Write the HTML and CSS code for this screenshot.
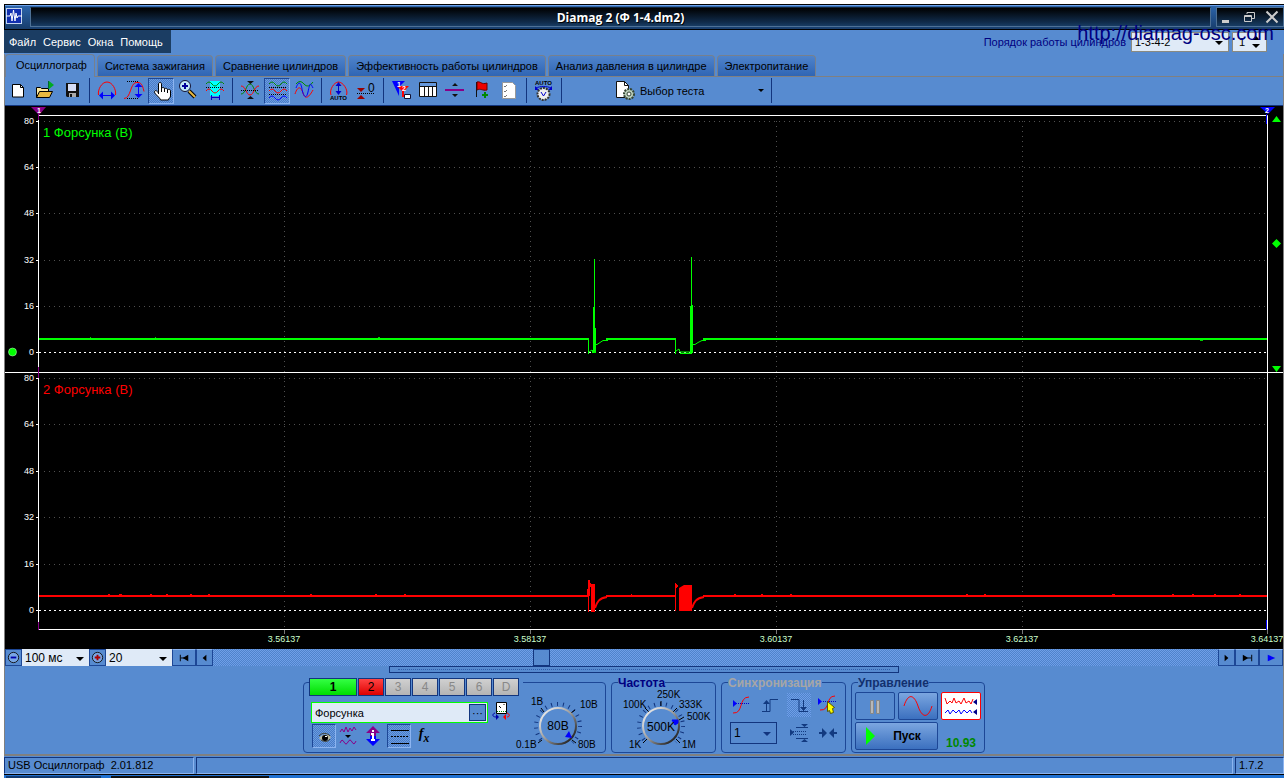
FILE: index.html
```html
<!DOCTYPE html>
<html lang="ru">
<head>
<meta charset="utf-8">
<title>Diamag 2</title>
<link rel="stylesheet" href="styles.css">
</head>
<body>
<div class="app">
  <header class="titlebar">
    <svg class="logo" viewBox="0 0 16 16"><rect width="16" height="16" fill="#c4d4f0"/><rect x="1" y="1" width="14" height="14" fill="#1230b0"/><path d="M0 8h4l1-3 1 8 1.500-11 1.500 11 1-8 1 5 1-2h4" fill="none" stroke="#fff"/></svg>
    <h1 class="title">Diamag 2 (Ф 1-4.dm2)</h1>
    <div class="winbtns">
      <button aria-label="Свернуть"><svg viewBox="0 0 14 14"><path d="M1 10h7v3H1z" fill="#ccc"/></svg></button>
      <button aria-label="Восстановить"><svg viewBox="0 0 14 14"><path d="M4 4V2.500h7.500v6H9M1.500 5.500h7v6h-7zM1.500 6.500h7" fill="none" stroke="#ccc"/></svg></button>
      <button aria-label="Закрыть"><svg viewBox="0 0 14 14"><path d="M1.500 1.500l11 11M12.500 1.500l-11 11" stroke="#ccc" stroke-width="2"/></svg></button>
    </div>
  </header>

  <div class="menurow">
    <nav class="menu"><button>Файл</button><button>Сервис</button><button>Окна</button><button>Помощь</button></nav>
    <div class="order">
      <label for="order">Порядок работы цилиндров</label>
      <span class="pick order-pick"><select id="order"><option>1-3-4-2</option></select></span>
      <span class="spin"><input aria-label="Цилиндр" value="1"><i class="up"></i><i class="down"></i></span>
    </div>
    <a class="site" href="http://diamag-osc.com">http://diamag-osc.com</a>
  </div>

  <main class="pane">
  <div class="tabs" role="tablist">
    <button role="tab" class="tab on" aria-selected="true">Осциллограф</button><button role="tab" class="tab">Система зажигания</button><button role="tab" class="tab">Сравнение цилиндров</button><button role="tab" class="tab">Эффективность работы цилиндров</button><button role="tab" class="tab">Анализ давления в цилиндре</button><button role="tab" class="tab">Электропитание</button>
  </div>

  <div class="toolbar">
    <button class="tool" aria-label="Новый"><svg viewBox="5 78 27 26"><path d="M12.500 84.500h8l3 3v9.500h-11z" fill="#fff" stroke="#000"/><path d="M20.500 84.500v3h3" fill="none" stroke="#000"/></svg></button>
    <button class="tool" aria-label="Открыть"><svg viewBox="32 78 27 26"><path d="M36.500 97.500v-10h4l1 1h7v9z" fill="#fbe9a0" stroke="#000"/><path d="M36.500 97.500l3-6h13l-3 6z" fill="#e8b840" stroke="#000"/><path d="M48.500 81v8" stroke="#063"/><path d="M49 81l5 4-5 4z" fill="#0a2"/></svg></button>
    <button class="tool" aria-label="Сохранить"><svg viewBox="59 78 27 26"><path d="M66 83h13v14H67l-1-1z" fill="#111"/><path d="M68 84h8v7h-8z" fill="#d5ddf5"/><path d="M69 93h7v4h-7z" fill="#aaa"/><path d="M70 94h2v3h-2z" fill="#111"/></svg></button>
    <i class="sep"></i>
    <button class="tool" aria-label="Масштаб времени"><svg viewBox="94 78 27 26"><path d="M98.500 95c-1-5 3-13 8.500-13s9.500 8 8.500 13" fill="none" stroke="#f00"/><path d="M102 95.500h10" stroke="#00f"/><path d="M99 95.500l4-4v8zM115 95.500l-4-4v8z" fill="#00f"/></svg></button>
    <button class="tool" aria-label="Масштаб уровня"><svg viewBox="121 78 27 26"><path d="M127 81.500h12M127 98.500h12" stroke="#000" stroke-dasharray="1 1"/><path d="M124 98.500c7 0 6-15 12-16h2c4 0 5 5 6 9" fill="none" stroke="#f00"/><path d="M138.500 86v9" stroke="#00f"/><path d="M138.500 83l4 4h-8zM138.500 98l4-4h-8z" fill="#00f"/></svg></button>
    <button class="tool pressed" aria-label="Рука"><svg viewBox="148 78 27 26"><path d="M158.500 94v-10c0-2 3-2 3 0v5c0-2 3-2 3 0 0-1 3-1 3 1 0-1 3-1 3 1v5c0 2-2 2-2 4h-8c0-2-6-6-6-8s2-2 4 1z" fill="#fff" stroke="#000"/><path d="M161.500 89v3M164.500 89v3M167.500 90v3" stroke="#000"/></svg></button>
    <button class="tool" aria-label="Лупа"><svg viewBox="175 78 27 26"><path d="M189 91l6 6" stroke="#000" stroke-width="4"/><path d="M189 91l6 6" stroke="#e8b840" stroke-width="2"/><circle cx="185" cy="86" r="5.500" fill="#bfe8f8" stroke="#113"/><path d="M182 86h6M185 83v6" stroke="#009" stroke-width="2"/></svg></button>
    <button class="tool" aria-label="Окно просмотра"><svg viewBox="202 78 27 26"><path d="M210 81h10v15h-10z" fill="#0ff"/><path d="M206 84q3-4 6 0t6 0 6 0" fill="none" stroke="#080"/><path d="M206 87.500h18" stroke="#000" stroke-dasharray="1 1"/><path d="M206 91q3-4 6 0t6 0 6 0" fill="none" stroke="#f00"/><path d="M211.500 95v5M219.500 95v5M212 97.500h7" stroke="#00c"/></svg></button>
    <i class="sep"></i>
    <button class="tool" aria-label="Совместить"><svg viewBox="237 78 27 26"><path d="M241 94c5 0 5-10 9-10s4 10 9 10" fill="none" stroke="#080"/><path d="M241 86c5 0 5 9 9 9s4-9 9-9" fill="none" stroke="#f00"/><path d="M241 90.500h18" stroke="#000" stroke-dasharray="1 1"/><path d="M247 81h7l-3.500 3zM247 99h7l-3.500-3z" fill="#111"/></svg></button>
    <button class="tool pressed" aria-label="Разделить"><svg viewBox="264 78 27 26"><g fill="none"><path d="M269 84q3-4 6 0t6 0 6 0" stroke="#080"/><path d="M269 91q3-4 6 0t6 0 6 0" stroke="#f00"/><path d="M269 98q3-4 6 0t6 0 6 0" stroke="#00f"/><path d="M269 87.500h18M269 94.500h18" stroke="#000" stroke-dasharray="1 1"/></g></svg></button>
    <button class="tool" aria-label="Наложить"><svg viewBox="291 78 27 26"><g fill="none"><path d="M296 84q4-5 8 0t9-2" stroke="#080"/><path d="M295 94c3-9 6-7 8-1s5 6 10-3" stroke="#f00"/><path d="M296 88c3-8 5-5 6 1s4 12 6 3 2-10 5-4" stroke="#00f"/></g></svg></button>
    <i class="sep"></i>
    <button class="tool" aria-label="Авто"><svg viewBox="326 78 27 26"><path d="M331 95c-2-5 3-13 7.500-13s10 8 8 13" fill="none" stroke="#f00"/><path d="M338.500 85v8" stroke="#00c"/><path d="M338.500 82l3 4h-6zM338.500 95l3-4h-6z" fill="#00c"/><text class="micro" x="330" y="100">AUTO</text></svg></button>
    <button class="tool" aria-label="Нулевой уровень"><svg viewBox="353 78 27 26"><path d="M357 88h8l-4 4zM357 99h8l-4-4z" fill="#900"/><path d="M357 93.500h18" stroke="#000" stroke-dasharray="1 1"/><text class="zero" x="368" y="92">0</text></svg></button>
    <i class="sep"></i>
    <button class="tool" aria-label="Маркеры"><svg viewBox="388 78 27 26"><path d="M392 81h13l-6 6v9" fill="#00f"/><path d="M397 86h12l-5 5v6h-2v-6z" fill="#f00"/><text class="marker" x="397" y="87">1</text><text class="marker" x="402" y="91">2</text><path d="M404.500 94.500h6v4h-6z" fill="#fff" stroke="#113"/></svg></button>
    <button class="tool" aria-label="Таблица"><svg viewBox="415 78 27 26"><path d="M419.500 82.500h17v14h-17z" fill="#fff" stroke="#111"/><path d="M420 83h16v3h-16z" fill="#69d"/><path d="M420 86.500h16M424.500 86v10M428.500 86v10M432.500 86v10" stroke="#111"/></svg></button>
    <button class="tool" aria-label="Линия"><svg viewBox="442 78 27 26"><path d="M445 90h19" stroke="#808" stroke-width="2"/><path d="M452 86h6l-3-3zM452 94h6l-3 3z" fill="#111"/></svg></button>
    <button class="tool" aria-label="Метка"><svg viewBox="469 78 27 26"><path d="M476.500 82v15" stroke="#111"/><path d="M477 82c4-1 4 3 10 1v7c-5 1-6-2-10 0z" fill="#e00" stroke="#600"/><path d="M485 92v6M482 95h6" stroke="#080" stroke-width="2"/></svg></button>
    <button class="tool" aria-label="Список"><svg viewBox="496 78 27 26"><path d="M502.500 82.500h10l3 3v13h-13z" fill="#fff" stroke="#999"/><path d="M504 86l1 1 2-2m-3 6l1 1 2-2m-3 6l1 1 2-2" fill="none" stroke="#777"/></svg></button>
    <i class="sep"></i>
    <button class="tool" aria-label="Автоматическое напряжение"><svg viewBox="531 78 27 26"><text class="micro" x="535" y="85">AUTO</text><path d="M536 88c4-2 11-2 15 0" fill="none" stroke="#00c"/><path d="M535 86v4h4zM552 86v4h-4z" fill="#00c"/><circle cx="543.500" cy="94" r="6" fill="#eee" stroke="#333" stroke-width="2" stroke-dasharray="2 1"/><path d="M541 92l2.500 4 2.500-4" fill="none" stroke="#00c"/></svg></button>
    <i class="sep"></i>
    <button class="test"><svg viewBox="614 80 22 20"><path d="M616.500 80.500h8l4 4v12h-12z" fill="#fff" stroke="#111"/><path d="M624.500 80.500v4h4" fill="none" stroke="#111"/><circle cx="629" cy="93" r="5" fill="#bcd0bc" stroke="#343" stroke-width="2" stroke-dasharray="2 1"/><circle cx="629" cy="93" r="2" fill="#fff" stroke="#343"/></svg><span>Выбор теста</span><i class="down"></i></button>
    <i class="sep"></i>
  </div>

  <svg class="scope" viewBox="5 106 1278 543" role="img" aria-label="Осциллограмма">
    <rect x="5" y="106" width="1278" height="543" fill="#000"/>
    <g class="grid">
      <path d="M44 121.500H1267M44 167.500H1267M44 213.500H1267M44 260.500H1267M44 306.500H1267M44 378.500H1267M44 424.500H1267M44 471.500H1267M44 517.500H1267M44 564.500H1267"/>
      <path d="M284.500 121V629M530.500 121V629M776.500 121V629M1022.500 121V629"/>
    </g>
    <path class="zero-line" d="M39 352.500H1267M39 610.500H1267"/>
    <path class="frame" d="M38.500 629.500V115.500H1267.500V629.500H38M5 372.500H1283M36 121.500h3M36 167.500h3M36 213.500h3M36 260.500h3M36 306.500h3M36 352.500h3M36 378.500h3M36 424.500h3M36 471.500h3M36 517.500h3M36 564.500h3M36 610.500h3"/>
    <path d="M284.500 630v4M530.500 630v4M776.500 630v4M1022.500 630v4M1267.500 630v4" stroke="#777"/>
    <path d="M38.500 114v6M38.500 367v11M38.500 622v8" stroke="#808"/>
    <path d="M1266.500 114v10M1266.500 620v10" stroke="#00f"/>
    <path d="M31 107h15l-7 8z" fill="#808"/><path d="M1260 107h15l-7 7z" fill="#00f"/>
    <text class="marker" x="37" y="113">1</text><text class="marker" x="1265" y="113">2</text>
    <g class="scale">
      <text x="34" y="124">80</text><text x="34" y="170">64</text><text x="34" y="216">48</text><text x="34" y="263">32</text><text x="34" y="309">16</text><text x="34" y="355">0</text>
      <text x="34" y="381">80</text><text x="34" y="427">64</text><text x="34" y="474">48</text><text x="34" y="520">32</text><text x="34" y="567">16</text><text x="34" y="613">0</text>
    </g>
    <g class="times"><text x="284" y="642">3.56137</text><text x="530" y="642">3.58137</text><text x="776" y="642">3.60137</text><text x="1022" y="642">3.62137</text><text x="1267" y="642">3.64137</text></g>
    <text class="ch green" x="43" y="137">1 Форсунка (В)</text>
    <text class="ch red" x="43" y="394">2 Форсунка (В)</text>
    <g fill="none" stroke="#0f0">
      <path stroke-width="2" d="M39 339H589M606 339H676M703 339H1267"/>
      <path d="M588.500 339V354M589 352l3-2 1 3M594.500 353V259M593.500 353V307M595.500 353V328M592.500 353v-3M595 344.500h2l3-2 3-2h5M675.500 339V354M676 351l3-2 1 3h11M691.500 353V257M690.500 353V306M692.500 353V305M693 344.500h2l3-2 4-2h4M680 353.500h12"/>
      <path stroke="#0c0" d="M90.500 337v1M378 337.500h2M1200 340.500h3M155 337.500h1"/>
    </g>
    <g fill="none" stroke="#f00">
      <path stroke-width="2" d="M39 596H588M606 596H675M703 596H1267"/>
      <path d="M587.500 597V589M588.500 612V580M589.500 596V580M590.500 583v4M675.500 598V590M675.500 611V583M676.500 584v4M677.500 585v2"/>
      <path d="M591 584h4V612h-4zM679 588l5-3h8v26H679z" fill="#f00" stroke="none"/>
      <path d="M595 608c2-6 4-10 12-11M692 608c2-6 4-10 12-11" stroke-width="2"/>
      <path d="M108 594.500h2M119 594.500h3M150 594.500h2M166 594.500h2M190 594.500h2M208 594.500h2M310 594.500h2M375 594.500h2M404 594.500h2M631 594.500h1M734 594.500h2M761 594.500h2M790 594.500h2M966 594.500h2M984 594.500h2M1112 594.500h3M1172 594.500h2M1192 594.500h2M1214 594.500h2M1239 594.500h2"/>
    </g>
    <path d="M1272 122h9l-4.500-6zM1272 366h9l-4.500 6zM1276.500 239l4.500 4.500-4.500 4.500-4.500-4.500z" fill="#0f0"/>
    <circle cx="12.500" cy="352" r="4" fill="#0f0" stroke="#cfc" stroke-width=".5"/>
  </svg>

  <div class="scrollrow">
    <button class="sq" aria-label="Уменьшить"><svg viewBox="0 0 16 16"><circle cx="8" cy="8" r="5.500" fill="#79a6e4" stroke="#111"/><path d="M5 8h6" stroke="#00a" stroke-width="2"/></svg></button>
    <span class="pick time-pick"><select aria-label="Время"><option>100 мс</option></select></span>
    <button class="sq" aria-label="Увеличить"><svg viewBox="0 0 16 16"><circle cx="8" cy="8" r="5.500" fill="#79a6e4" stroke="#111"/><path d="M5 8h6M8 5v6" stroke="#a00" stroke-width="2"/></svg></button>
    <span class="pick step-pick"><select aria-label="Шаг"><option>20</option></select></span>
    <button class="nav wide" aria-label="В начало"><svg viewBox="0 0 16 16"><path d="M3 5h1v7H3zM12 5v7L6 8.500z"/><path d="M4 8.500h4" stroke="#000"/></svg></button>
    <button class="nav" aria-label="Назад"><svg viewBox="0 0 16 16"><path d="M10 5v7L6 8.500z"/></svg></button>
    <div class="track"><button class="thumb" aria-label="Ползунок"></button></div>
    <button class="nav" aria-label="Вперёд"><svg viewBox="0 0 16 16"><path d="M6 5v7l4-3.500z"/></svg></button>
    <button class="nav wide" aria-label="В конец"><svg viewBox="0 0 16 16"><path d="M3 5v7l6-3.500zM12 5h1v7h-1z"/><path d="M8 8.500h4" stroke="#000"/></svg></button>
    <button class="nav wide" aria-label="Воспроизвести"><svg viewBox="0 0 16 16"><path d="M4 5v7l8-3.500z" fill="#00f"/></svg></button>
  </div>

  <div class="splitter"><i></i></div>

  <div class="panels">
    <section class="group channels">
      <div class="chbtns"><button class="c1">1</button><button class="c2">2</button><button>3</button><button>4</button><button>5</button><button>6</button><button>D</button></div>
      <div class="sensor">
        <span class="field"><input aria-label="Датчик" value="Форсунка"><button aria-label="Выбрать">···</button></span>
        <svg class="swap" viewBox="0 0 18 18"><path d="M4.500.500h10v11h-10z" fill="#fff" stroke="#000"/><path d="M5 9.500h9" stroke="#080" stroke-dasharray="1 1"/><path d="M7 4l2 2M12 2v1" stroke="#000"/><path d="M3 11c-3 1-3 4 1 4" fill="none" stroke="#00a"/><path d="M4 12v6l3-3z" fill="#00a"/><path d="M15 11c3 1 3 4 0 4" fill="none" stroke="#f00"/><path d="M14 12v6l-3-3z" fill="#f00"/></svg>
      </div>
      <div class="modes">
        <button class="pressed" aria-label="Показать"><svg viewBox="0 0 24 24"><path d="M7 14c3-4 9-5 12-1-3 5-9 5-12 1z" fill="#b9b9a0"/><path d="M7 12c3-4 9-3 11 0M9 16c3 2 7 2 9-1" fill="none" stroke="#443"/><circle cx="13" cy="14" r="3"/><path d="M13 12h2v1h-2z" fill="#fff"/></svg></button>
        <button aria-label="Фильтр"><svg viewBox="0 0 24 24"><path d="M4 8l2-3 2 3 2-5 2 5 2-4 2 3 2-4 2 3" fill="none" stroke="#808"/><path d="M9 11h6l-3 3z"/><path d="M4 19q2-5 4-1t4 0 4 0 4-1" fill="none" stroke="#808"/></svg></button>
        <button aria-label="Инверсия"><svg viewBox="0 0 24 24"><path d="M12 2l7 7h-4v3H9V9H5z" fill="#808"/><path d="M12 22l7-7h-4v-3H9v3H5z" fill="#00f"/><path d="M12 6v2M12 9v7M10 10h2M10 16h4" stroke="#fff" stroke-width="2"/></svg></button>
        <button class="pressed" aria-label="Линии"><svg viewBox="0 0 24 24"><path d="M4 6.500h18M4 19.500h18" stroke="#000"/><path d="M4 12.500h18" stroke="#000" stroke-dasharray="2 1"/></svg></button>
        <button class="fx">f<sub>x</sub></button>
      </div>
      <svg class="knob" viewBox="514 690 88 60">
        <defs><linearGradient id="rim" x2="1" y2="1"><stop offset="0" stop-color="#fff"/><stop offset=".5" stop-color="#999"/><stop offset="1" stop-color="#000"/></linearGradient></defs>
        <circle class="ticks" cx="558" cy="726" r="22"/><path d="M558 728l-22 22h44z" fill="#578bd0"/>
        <path d="M541 708l3 4M575 710l-4 3M538 743l4-3M576 743l-4-3" stroke="#000"/>
        <circle class="rim" cx="558" cy="726" r="18"/><path d="M565 737l4-6 3 7z" fill="#00f"/>
        <text class="knob-val" x="558" y="730">80В</text><text x="531" y="705">1В</text><text x="580" y="708">10В</text><text x="516" y="748">0.1В</text><text x="578" y="748">80В</text>
      </svg>
    </section>

    <section class="group freq">
      <h2 class="navy">Частота</h2>
      <svg class="knob" viewBox="618 687 98 62">
        <circle class="ticks" cx="661" cy="726" r="22"/><path d="M661 728l-24 23h48z" fill="#578bd0"/>
        <path d="M661 701v5M645 708l4 4M677 708l-4 4M684 717l-5 3M643 743l4-4M680 743l-4-4" stroke="#000"/>
        <circle class="rim" cx="661" cy="726" r="18"/><path d="M672 720l6 0 0 3-3 2z" fill="#00f" stroke="#00f"/>
        <text class="knob-val" x="661" y="731">500K</text><text x="657" y="698">250K</text><text x="623" y="708">100K</text><text x="679" y="708">333K</text><text x="687" y="720">500K</text><text x="629" y="748">1K</text><text x="682" y="748">1M</text>
      </svg>
    </section>

    <section class="group sync">
      <h2 class="gray">Синхронизация</h2>
      <div class="syncgrid">
        <button aria-label="Уровень"><svg viewBox="0 0 24 24"><path d="M4 20c11 1 5-16 16-16" fill="none" stroke="#f00"/><path d="M7 10.500h13" stroke="#00c" stroke-dasharray="1 1"/><path d="M4 7v7l4-3.500z" fill="#00f"/></svg></button>
        <button aria-label="Фронт"><svg viewBox="0 0 24 24"><path d="M4 18.500h8v-12h8M8.500 18V8" fill="none" stroke="#123a80"/><path d="M5 11h7L8.500 7z" fill="#123a80"/></svg></button>
        <button class="hatch" aria-label="Спад"><svg viewBox="0 0 24 24"><path d="M4 6.500h8v12h9M16.500 7v11" fill="none" stroke="#123a80"/><path d="M13 14h7l-3.500 4z" fill="#123a80"/></svg></button>
        <button aria-label="Ручная"><svg viewBox="0 0 24 24"><path d="M4 17c11 1 5-14 15-14" fill="none" stroke="#f00"/><path d="M7 8.500h13" stroke="#00c" stroke-dasharray="1 1"/><path d="M2 5v7l4-3.500z" fill="#00f"/><path d="M11.500 8.500l7 6-2 1 1 4-3 1-1-3-2 1z" fill="#ff0" stroke="#550"/></svg></button>
        <span class="pick sync-pick"><select aria-label="Канал"><option>1</option></select></span>
        <button aria-label="Окно"><svg viewBox="0 0 24 24"><path d="M9 6.500h12M9 17.500h12" stroke="#123a80"/><path d="M6 10.500h14M6 13.500h14" stroke="#123a80" stroke-dasharray="1 1"/><path d="M3 8v7l4-3.500zM14 3h7l-3.500 3zM14 21h7l-3.500-3z" fill="#123a80"/></svg></button>
        <button aria-label="Центр"><svg viewBox="0 0 24 24"><path d="M3 12h7M14 12h7" stroke="#123a80" stroke-width="2"/><path d="M6 7v10l5-5zM18 7v10l-5-5z" fill="#123a80"/></svg></button>
      </div>
    </section>

    <section class="group control">
      <h2 class="dark">Управление</h2>
      <div class="ctlgrid">
        <button class="pause" aria-label="Пауза"><svg viewBox="0 0 38 26"><path d="M14.500 7.500h3v13h-3zM20.500 7.500h3v13h-3z" fill="#b8b8b8" stroke="#888"/></svg></button>
        <button class="raised" aria-label="Однократно"><svg viewBox="0 0 38 26"><path d="M5 13C9 0 15 1 19 13s10 13 14 0" fill="none" stroke="#f00"/></svg></button>
        <button class="rec" aria-label="Запись"><svg viewBox="0 0 38 26"><path d="M3 5l2 6 3-3 2 2 2-5 2 5 3-2 2 3 3-6 2 5 3-2 2 3 2-5" fill="none" stroke="#f00"/><path d="M3 20l3-3 2 4 3-4 3 3 3-3 2 4 3-4 3 3 3-3 2 3" fill="none" stroke="#00f"/><path d="M35 6v6l-4-3zM35 16v6l-4-3z" fill="#008"/></svg></button>
        <button class="raised start"><svg viewBox="0 0 12 20"><path d="M1 1v18l9-9z" fill="#0f0"/></svg><span>Пуск</span></button>
        <output>10.93</output>
      </div>
    </section>
  </div>
  </main>

  <footer class="status"><span class="dev">USB Осциллограф&nbsp; 2.01.812</span><span class="msg"></span><span class="ver">1.7.2</span></footer>
  <div class="edge"><i></i><i></i></div>
</div>
</body>
</html>
```
FILE: styles.css
```css
* { box-sizing: border-box; }
body { margin: 0; background: #fff; color: #000; font: 11px/14px "Liberation Sans", Arial, sans-serif; }
button, input, select { font: inherit; color: inherit; margin: 0; padding: 0; border: 0; background: none; border-radius: 0; }
svg { display: block; }
h1, h2 { margin: 0; font: inherit; font-weight: bold; }
.app { min-height: calc(100vh - 4px); margin: 4px 4px 0; background: #578bd0; display: flex; flex-direction: column; }

.titlebar { display: flex; height: 26px; background: linear-gradient(#2d66ad, #173d6c); border: solid #000; border-width: 1px 0 1px 1px; box-shadow: inset 0 1px #6da1e8; padding: 2px 0 2px 1px; }
.logo { width: 16px; height: 16px; margin: 1px 8px 0 0; }
.title { flex: 1; text-align: center; color: #fff; font: bold 12px/20px "Open Sans", sans-serif; text-shadow: 1px 1px #000; background: linear-gradient(#000, #102c4c 80%, #183c64); border: 1px solid #4e7196; border-top-color: #123; }
.winbtns { display: flex; gap: 8px; padding: 2px 4px; margin-left: 5px; background: linear-gradient(#000, #173c64); border: 1px solid #4e7196; }
.winbtns svg { width: 14px; height: 14px; }

.menurow { display: flex; position: relative; height: 24px; justify-content: space-between; }
.menu { display: flex; gap: 7px; padding: 0 8px 0 5px; background: #1b3d63; color: #fff; height: 23px; }
.order { display: flex; align-items: center; color: #000080; padding-right: 17px; gap: 3px; }
.order label { padding-right: 2px; }
.pick { position: relative; display: block; background: #dfeaf7; color: #000; }
.pick select { appearance: none; width: 100%; height: 100%; padding-left: 3px; outline: 0; }
.pick::after { content: ""; position: absolute; right: 5px; top: 50%; border: 4px solid transparent; border-top-color: currentColor; border-bottom: 0; pointer-events: none; margin-top: -1px; }
.order-pick { width: 98px; height: 20px; border: 1px solid #8a8a80; }
.spin { position: relative; width: 35px; height: 20px; background: #dfeaf7; border: 1px solid #8a8a80; color: #000; }
.spin input { width: 20px; height: 18px; padding-left: 6px; }
.spin .up, .spin .down { position: absolute; right: 6px; }
.spin .up { top: 3px; border: 4px solid transparent; border-top: 0; border-bottom-color: #000; }
.spin .down { bottom: 3px; }
.down { border: 4px solid transparent; border-bottom: 0; border-top-color: #000; }
.site { position: absolute; right: 10px; top: -8px; font: 20px/22px "Liberation Sans", Arial, sans-serif; color: #000080; text-decoration: none; }

.pane { flex: 1; display: flex; flex-direction: column; border: solid #808080; border-width: 0 1px 2px; }
.tabs { display: flex; align-items: flex-end; height: 23px; gap: 2px; border-bottom: 1px solid #808080; }
.tab { height: 21px; padding: 0 7px; border: solid #76808e; border-width: 1px 1px 0; border-radius: 4px 4px 0 0; background: linear-gradient(#4f83cb, #2f65b4); white-space: nowrap; }
.tab.on { height: 23px; margin-bottom: -1px; padding: 0 7px 3px 10px; background: #578bd0; }
.toolbar { display: flex; align-items: center; height: 29px; padding-bottom: 1px; border-bottom: 1px solid #12357e; }
.tool { width: 27px; height: 26px; }
.tool svg { width: 27px; height: 26px; }
.tool.pressed { width: 26px; margin-right: 1px; }
.pressed { background: repeating-conic-gradient(#4a7cc6 0 25%, #6a9ce2 0 50%) 0 0 / 2px 2px; border: 1px solid #1d4796; border-right-color: #8cb4f0; border-bottom-color: #8cb4f0; overflow: hidden; }
.tool.pressed svg { margin: -1px; }
.sep { flex: none; width: 8px; height: 25px; background: linear-gradient(#12357e, #12357e) 3px 0 / 1px 100% no-repeat; }
.test { display: flex; align-items: center; gap: 4px; width: 202px; padding-left: 48px; }
.test svg { width: 22px; height: 20px; }
.test .down { margin-left: auto; margin-right: 4px; border-width: 3px; border-bottom: 0; }
.micro { font: bold 6px "Liberation Sans", sans-serif; }
.zero { font: 12px "Liberation Sans", sans-serif; }
.marker { font: bold 7px "Liberation Sans", sans-serif; fill: #fff; }

.scope { width: 100%; height: auto; }
.grid path { stroke: #505050; stroke-dasharray: 1 4; }
.zero-line { stroke: #fff; stroke-dasharray: 2 3; }
.frame { stroke: #fff; fill: none; }
.scale { fill: #fff; font-size: 9px; text-anchor: end; }
.times { fill: #cfc; font-size: 9px; text-anchor: middle; }
.ch { font-size: 13px; }
.green { fill: #0f0; }
.red { fill: #f00; }

.scrollrow { display: flex; height: 17px; }
.sq { width: 17px; border: 1px solid #1d4796; }
.sq svg, .nav svg { width: 15px; height: 15px; }
.time-pick { width: 67px; font-size: 12px; }
.step-pick { width: 66px; font-size: 12px; }
.nav { width: 17px; border: 1px solid #1d4796; border-top-color: #8cb4f0; display: flex; justify-content: center; }
.nav.wide { width: 24px; }
.track { flex: 1; background: repeating-conic-gradient(#4f83cb 0 25%, #6f9fe8 0 50%) 0 0 / 2px 2px; padding-left: 25%; }
.thumb { display: block; width: 17px; height: 17px; background: #578bd0; border: 1px solid #12357e; }
.splitter { align-self: center; width: 510px; height: 7px; border: 1px solid #12357e; padding: 2px 8px; }
.splitter i { display: block; border-top: 1px dotted #2c5cab; }

.panels { display: flex; justify-content: center; gap: 5px; padding: 9px 0 0; }
.group { border: 1px solid #1d4796; border-radius: 4px; height: 71px; }
.group h2 { width: max-content; margin: -7px 0 0 6px; line-height: 14px; height: 14px; background: #578bd0; font-size: 12px; }
.navy { color: #000080; }
.gray { color: #a6a6a6; }
.dark { color: #12306e; }
.channels { width: 303px; display: grid; grid-template-columns: 205px 88px; grid-template-rows: 16px 25px 25px; padding-left: 5px; }
.chbtns { display: flex; gap: 1px; height: 18px; margin-top: -5px; background: #578bd0; width: 214px; }
.chbtns button { flex: none; width: 26px; border: 1px solid #12357e; background: linear-gradient(#d0d0d0, #b4b4b4); color: #888; font-size: 12px; }
.chbtns .c1 { width: 48px; background: linear-gradient(#3f4, #0d0); color: #000; font-weight: bold; }
.chbtns .c2 { background: linear-gradient(#f44, #d00); color: #000; }
.sensor { display: flex; gap: 4px; align-items: flex-start; padding: 3px 0 0 2px; }
.field { display: flex; width: 177px; height: 21px; border: 1px solid #0f0; background: #dfeaf7; padding: 1px; }
.field input { flex: 1; min-width: 0; padding-left: 2px; }
.field button { width: 17px; background: #578bd0; border: 1px solid #12357e; line-height: 12px; }
.swap { width: 18px; height: 18px; }
.modes { display: flex; gap: 1px; padding-left: 3px; }
.modes button { width: 24px; height: 24px; }
.modes svg { width: 24px; height: 24px; margin: -1px; }
.modes .fx { font: italic bold 14px/20px "Liberation Serif", serif; }
.knob { font-size: 10px; overflow: visible; }
.channels .knob { grid-column: 2; grid-row: 1 / 4; width: 88px; height: 60px; margin-top: 7px; }
.freq { width: 105px; }
.freq .knob { width: 98px; height: 62px; margin: -3px 0 0 6px; }
.ticks { fill: none; stroke: #12357e; stroke-width: 4; stroke-dasharray: 1 5; }
.rim { fill: #578bd0; stroke: url(#rim); stroke-width: 2; }
.knob-val { font-size: 12px; text-anchor: middle; }
.sync { width: 125px; }
.syncgrid { display: grid; grid-template-columns: 24px 24px 24px 24px; gap: 4px 5px; padding-left: 7px; padding-top: 3px; }
.syncgrid svg { width: 24px; height: 24px; }
.syncgrid button { height: 24px; }
.hatch { background: repeating-conic-gradient(#4f83cb 0 25%, #6f9fe8 0 50%) 0 0 / 2px 2px; }
.sync-pick { grid-column: 1 / 3; width: 47px; height: 22px; margin: 1px 0 0 1px; border: 1px solid #12357e; background: none; font-size: 12px; }
.sync-pick::after { color: #12357e; }
.control { width: 134px; }
.ctlgrid { display: grid; grid-template-columns: 40px 40px 40px; gap: 2px 3px; padding: 2px 3px; }
.ctlgrid button { height: 28px; border: 1px solid #1d4796; border-radius: 2px; }
.ctlgrid svg { width: 38px; height: 26px; }
.ctlgrid .raised { background: linear-gradient(#7ba6e0, #3b70bf); }
.ctlgrid .rec { background: #fff; border-color: #f00; }
.ctlgrid .start { grid-column: 1 / 3; display: flex; align-items: center; padding-left: 9px; font-size: 12px; font-weight: bold; }
.ctlgrid .start svg { width: 12px; height: 20px; }
.start span { flex: 1; text-align: center; }
.ctlgrid output { align-self: end; text-align: center; color: #080; font-weight: bold; font-size: 12px; }

.status { display: flex; gap: 2px; height: 18px; padding: 1px 0 0; }
.status span { border: 1px solid #12357e; border-right-color: #8cb4f0; border-bottom-color: #8cb4f0; padding-left: 3px; line-height: 15px; }
.dev { width: 190px; white-space: nowrap; }
.msg { flex: 1; }
.ver { width: 49px; }
.edge { display: flex; gap: 10px; height: 4px; border-top: 1px solid #000; background: #1f70d0; padding: 1px 0 0 2px; }
.edge i { width: 95px; background: #123a70; }
.edge i + i { width: 158px; background: #111; }
```
